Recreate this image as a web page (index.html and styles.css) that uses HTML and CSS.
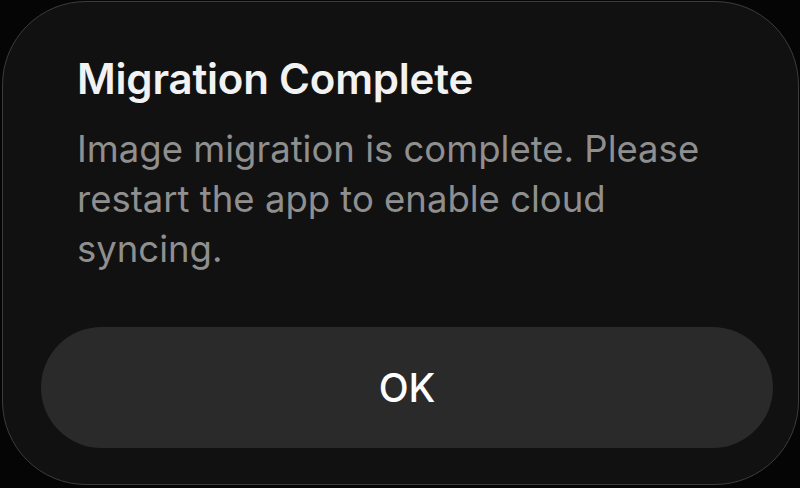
FILE: index.html
```html
<!DOCTYPE html>
<html>
<head>
<meta charset="utf-8">
<link rel="stylesheet" href="styles.css">
</head>
<body>
<div class="dialog">
  <div class="content">
    <h1 class="title">Migration Complete</h1>
    <p class="message">Image migration is complete. Please restart the app to enable cloud syncing.</p>
  </div>
  <button class="ok-btn">OK</button>
</div>
</body>
</html>
```
FILE: styles.css
```css
html, body {
  margin: 0;
  padding: 0;
  background: #050505;
  width: 800px;
  height: 488px;
  overflow: hidden;
}
body {
  font-family: Inter, "Noto Sans", sans-serif;
  padding: 1px 2px 0 2px;
  box-sizing: border-box;
}
.dialog {
  box-sizing: border-box;
  width: 797px;
  height: 484px;
  background: #111111;
  border: 1.5px solid #3c3c3c;
  border-radius: 84px;
  display: flex;
  flex-direction: column;
  padding: 53px 26px 36px 38px;
}
.content {
  padding-left: 36px;
  flex: 1;
}
.title {
  margin: 0;
  font-size: 42px;
  font-weight: 600;
  color: #f2f2f2;
  line-height: 48px;
  letter-spacing: -0.2px;
}
.message {
  margin: 21px 0 0 0;
  font-size: 36.5px;
  font-weight: 400;
  color: #8f8f8f;
  line-height: 50px;
  max-width: 680px;
}
.ok-btn {
  height: 121px;
  width: 732px;
  border: none;
  border-radius: 61px;
  background: #2a2a2a;
  color: #ffffff;
  font-family: Inter, "Noto Sans", sans-serif;
  font-size: 39px;
  font-weight: 500;
  padding: 0;
}
```
